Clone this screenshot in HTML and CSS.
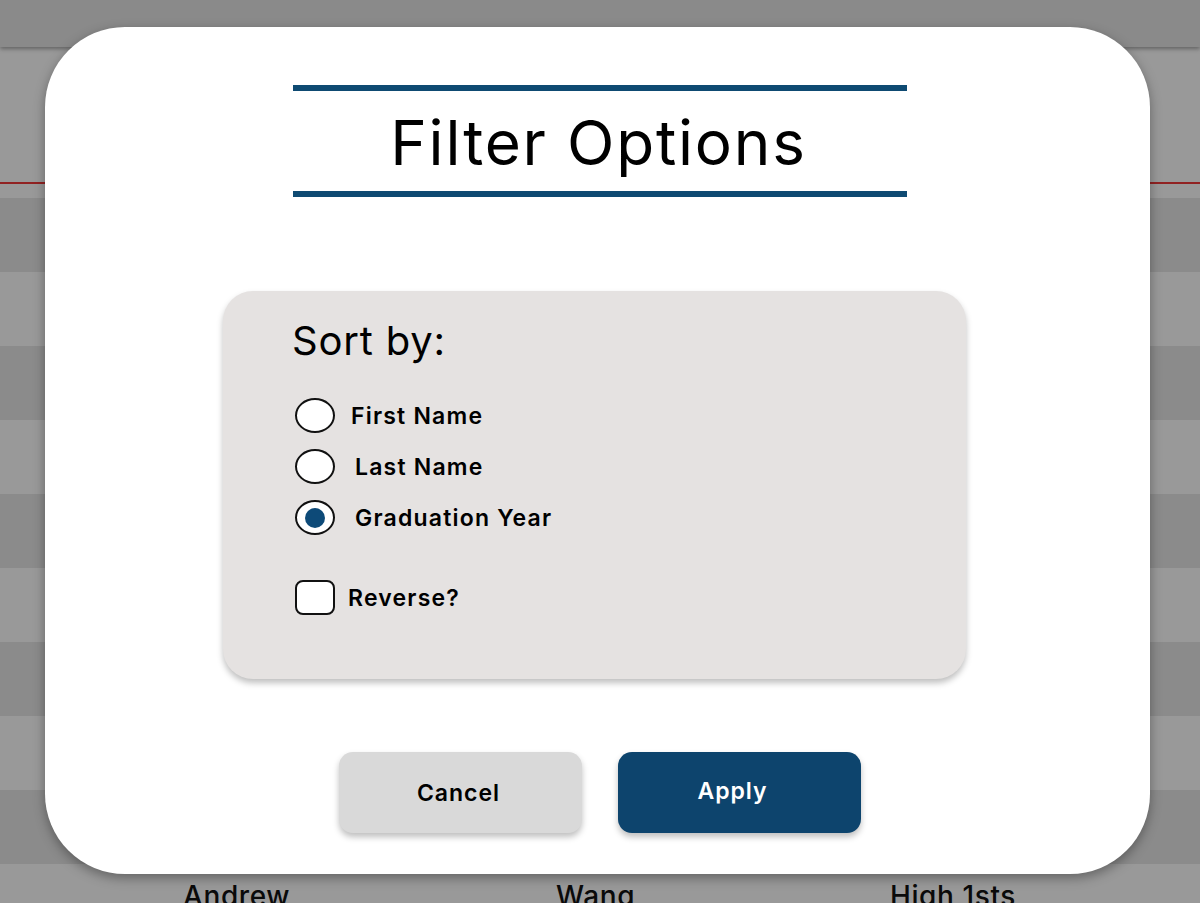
FILE: index.html
```html
<!DOCTYPE html>
<html lang="en">
<head>
<meta charset="utf-8">
<title>Filter Options</title>
<link rel="stylesheet" href="styles.css">
</head>
<body>
<div class="page">
  <div class="topbar"></div>
  <div class="header"></div>
  <div class="rows">
    <div class="row alt"></div>
    <div class="row"></div>
    <div class="row alt"></div>
    <div class="row"></div>
    <div class="row alt"></div>
    <div class="row"></div>
    <div class="row alt"></div>
    <div class="row"></div>
    <div class="row alt"></div>
    <div class="row last">
      <span class="cell c1">Andrew</span>
      <span class="cell c2">Wang</span>
      <span class="cell c3">High 1sts</span>
    </div>
  </div>
</div>
<div class="overlay"></div>
<div class="modal">
  <div class="title">Filter Options</div>
  <div class="panel">
    <div class="sort-label">Sort by:</div>
    <div class="options">
      <label class="opt"><span class="radio"></span><span class="txt t-first">First Name</span></label>
      <label class="opt"><span class="radio"></span><span class="txt">Last Name</span></label>
      <label class="opt"><span class="radio checked"><span class="dot"></span></span><span class="txt">Graduation Year</span></label>
    </div>
    <label class="opt reverse"><span class="check"></span><span class="txt t-rev">Reverse?</span></label>
  </div>
  <div class="buttons">
    <button class="btn cancel">Cancel</button>
    <button class="btn apply">Apply</button>
  </div>
</div>
</body>
</html>
```
FILE: styles.css
```css
* { box-sizing: border-box; }
html, body { margin: 0; padding: 0; }
body {
  width: 1200px;
  height: 903px;
  overflow: hidden;
  font-family: "Inter", "Noto Sans", sans-serif;
  position: relative;
  background: #fff;
}
.page { width: 1200px; }
.topbar {
  height: 47px;
  background: #e6e6e6;
  box-shadow: 0 2px 4px rgba(0,0,0,0.35);
  position: relative;
}
.header {
  height: 151px;
  background: #fff;
  padding-top: 135px;
}
.header::before {
  content: "";
  display: block;
  height: 2px;
  background: #f23a3a;
}
.row { height: 74px; background: #fff; position: relative; }
.row.alt { background: #e8e8e8; }
.row.last { font-size: 28px; font-weight: 500; color: #111; letter-spacing: 0.6px; }
.cell { position: absolute; top: 15px; }
.c1 { left: 183px; }
.c2 { left: 556px; }
.c3 { left: 890px; }
.overlay {
  position: absolute;
  inset: 0;
  background: rgba(0,0,0,0.4);
}
.modal {
  position: absolute;
  left: 45px;
  top: 27px;
  width: 1105px;
  height: 847px;
  background: #fff;
  border-radius: 80px;
  box-shadow: 0 4px 12px rgba(0,0,0,0.35);
  display: flex;
  flex-direction: column;
  align-items: flex-start;
  padding-top: 58px;
}
.title {
  margin-left: 248px;
  width: 614px;
  height: 112px;
  border-top: 6px solid #0e4a72;
  border-bottom: 6px solid #0e4a72;
  text-align: center;
  font-size: 62px;
  font-weight: 400;
  line-height: 103px;
  color: #000;
  letter-spacing: 1.8px;
  padding-right: 3px;
}
.panel {
  margin-left: 178px;
  margin-top: 94px;
  width: 743px;
  height: 388px;
  background: #e5e2e1;
  border-radius: 30px;
  box-shadow: 0 4px 6px rgba(0,0,0,0.25);
  padding: 25px 0 0 69px;
}
.sort-label {
  font-size: 40px;
  line-height: 50px;
  font-weight: 400;
  color: #000;
  letter-spacing: 0.8px;
}
.options {
  margin-top: 32px;
  margin-left: 3px;
  display: flex;
  flex-direction: column;
  gap: 16px;
}
.opt {
  display: flex;
  align-items: center;
  height: 35px;
}
.radio {
  width: 40px;
  height: 35px;
  border: 2px solid #111;
  border-radius: 50%;
  background: #fff;
  display: flex;
  align-items: center;
  justify-content: center;
  flex: none;
}
.dot {
  width: 20px;
  height: 20px;
  border-radius: 50%;
  background: #0d4a78;
}
.txt {
  margin-left: 20px;
  font-size: 23px;
  font-weight: 600;
  color: #000;
  letter-spacing: 1.2px;
}
.t-first { margin-left: 16px; }
.reverse { margin-top: 45px; margin-left: 3px; }
.check {
  width: 40px;
  height: 35px;
  border: 2px solid #111;
  border-radius: 8px;
  background: #fff;
  flex: none;
}
.t-rev { margin-left: 13px; }
.buttons {
  margin-left: 294px;
  margin-top: 73px;
  display: flex;
  gap: 36px;
}
.btn {
  width: 243px;
  height: 81px;
  border: none;
  border-radius: 14px;
  font-family: inherit;
  font-size: 23px;
  font-weight: 600;
  letter-spacing: 1px;
  box-shadow: 0 4px 6px rgba(0,0,0,0.25);
}
.cancel { background: #d9d9d9; color: #000; padding-right: 10px; }
.apply { background: #0d446d; color: #fff; padding: 0 14px 4px 0; }
```
